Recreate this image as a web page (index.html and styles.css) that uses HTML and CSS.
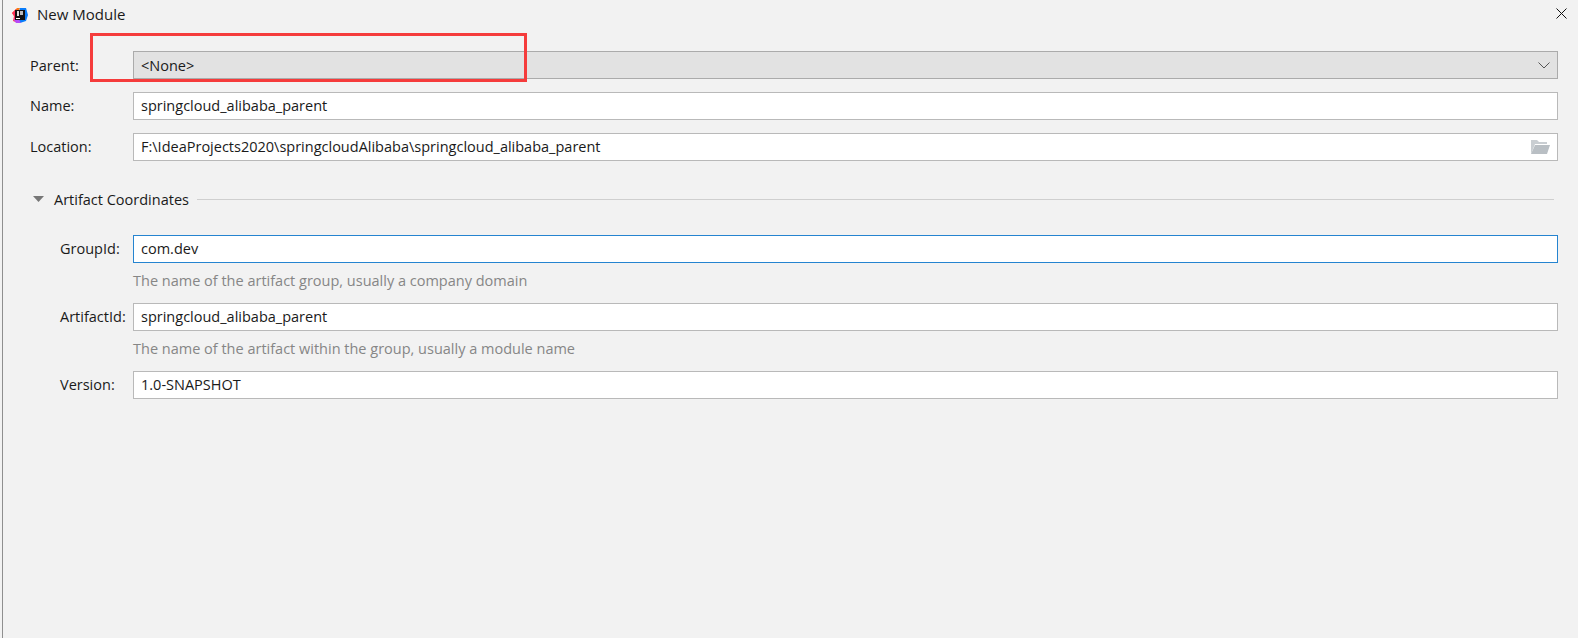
FILE: index.html
```html
<!DOCTYPE html>
<html lang="en">
<head>
<meta charset="utf-8">
<title>New Module</title>
<link rel="stylesheet" href="styles.css">
</head>
<body>
<div class="dialog">
  <header class="titlebar">
    <svg class="logo" width="16" height="16" viewBox="0 0 16 16">
      <path d="M0 6 L5 1 L8 1 L5 8 L2 9 Z" fill="#f97a12"/>
      <path d="M0 6 L2 9 L1 14 L6 16 L8 8 L4 2 Z" fill="#fe315d"/>
      <path d="M8 1 L14 1 L16 8 L14 14 L8 16 L5 13 Z" fill="#087cfa"/>
      <path d="M2 13 L5 9 L9 16 L4 16 Z" fill="#b74af7"/>
      <rect x="3" y="3" width="10" height="10" fill="#111"/>
      <rect x="4" y="11" width="4" height="1" fill="#fff"/>
      <rect x="5" y="4" width="2" height="5" fill="#ddd"/>
      <rect x="8" y="4" width="3" height="4" fill="#bbb"/>
    </svg>
    <span class="title">New Module</span>
    <svg class="close" width="11" height="11" viewBox="0 0 11 11">
      <path d="M.5.5l10 10M10.500.5l-10 10" stroke="#111" stroke-width="1" fill="none"/>
    </svg>
  </header>

  <main class="form">
    <div class="row row-top row-first">
      <label class="label">Parent:</label>
      <div class="field select"><span>&lt;None&gt;</span>
        <svg width="12" height="7" viewBox="0 0 12 7"><path d="M.5.5L6 6l5.500-5.500" stroke="#555" fill="none"/></svg>
      </div>
    </div>
    <div class="row row-top">
      <label class="label">Name:</label>
      <div class="field"><span>springcloud_alibaba_parent</span></div>
    </div>
    <div class="row row-top">
      <label class="label">Location:</label>
      <div class="field"><span>F:\IdeaProjects2020\springcloudAlibaba\springcloud_alibaba_parent</span>
        <svg width="19" height="14" viewBox="0 0 19 14"><path d="M0 14V0h6l2 2h8v2H4z" fill="#c9ced2"/><path d="M4 5h15l-3 9H0z" fill="#b9bfc4"/></svg>
      </div>
    </div>

    <div class="section-head">
      <svg class="caret" width="11" height="6" viewBox="0 0 11 6"><path d="M0 0h11L5.500 6z" fill="#777"/></svg>
      <span class="section-title">Artifact Coordinates</span>
      <i class="rule"></i>
    </div>

    <div class="row row-sub">
      <label class="label">GroupId:</label>
      <div class="field focus"><span>com.dev</span></div>
    </div>
    <p class="hint">The name of the artifact group, usually a company domain</p>
    <div class="row row-sub">
      <label class="label">ArtifactId:</label>
      <div class="field"><span>springcloud_alibaba_parent</span></div>
    </div>
    <p class="hint">The name of the artifact within the group, usually a module name</p>
    <div class="row row-sub">
      <label class="label">Version:</label>
      <div class="field"><span>1.0-SNAPSHOT</span></div>
    </div>
  </main>
  <div class="callout"></div>
</div>
</body>
</html>
```

FILE: styles.css
```css
* { box-sizing: border-box; }
html, body { margin: 0; height: 100%; }
body {
  background: #f2f2f2;
  font-family: "Open Sans", "Noto Sans", sans-serif;
  font-size: 14.5px;
  line-height: 20px;
  color: #1a1a1a;
  overflow: hidden;
}
.dialog {
  position: relative;
  height: 638px;
  margin-left: 2px;
  border-left: 1px solid #8f8f8f;
  background: #f2f2f2;
}
.titlebar {
  display: flex;
  align-items: center;
  height: 30px;
  padding: 0 11px 0 9px;
}
.logo { flex: none; }
.title { margin-left: 9px; flex: 1; font-size: 15px; line-height: 20px; height: 22px; }
.close { align-self: flex-start; margin-top: 8px; }
.form {
  padding: 21px 20px 0 27px;
}
.row {
  display: grid;
  align-items: center;
  margin-bottom: 13px;
}
.label { line-height: 28px; height: 28px; }
.row-first .label { line-height: 30px; }
.row-top { grid-template-columns: 103px 1fr; }
.row-sub { grid-template-columns: 73px 1fr; padding-left: 30px; margin-bottom: 0; }
.field {
  display: flex;
  align-items: center;
  justify-content: space-between;
  height: 28px;
  padding: 0 7px;
  background: #fff;
  border: 1px solid #b9b9b9;
  white-space: pre;
}
.select { background: #e2e2e2; border-color: #ababab; padding-right: 7px; }
.select span { padding-top: 2px; }
.focus { border-color: #2584d0; }
.section-head {
  display: flex;
  align-items: center;
  height: 22px;
  margin: 27px 4px 25px 3px;
}
.section-title { padding-top: 2px; }
.caret { margin-right: 10px; }
.rule { flex: 1; height: 1px; background: #cfcfcf; margin-left: 8px; }
.hint {
  margin: 0;
  padding-left: 103px;
  height: 40px;
  padding-top: 8px;
  color: #868686;
}
.callout {
  position: absolute;
  left: 87px;
  top: 33px;
  width: 437px;
  height: 49px;
  border: 3px solid #f53c3c;
}
```
